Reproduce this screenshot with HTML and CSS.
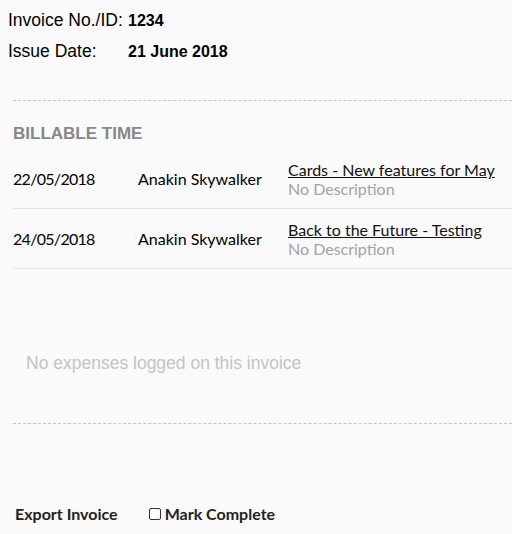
FILE: index.html
```html
<!DOCTYPE html>
<html>
<head>
<meta charset="utf-8">
<link rel="stylesheet" href="styles.css">
</head>
<body>
<div class="page">
  <table class="meta">
    <tr><td class="label">Invoice No./ID:</td><td class="value">1234</td></tr>
    <tr><td class="label">Issue Date:</td><td class="value">21 June 2018</td></tr>
  </table>
  <div class="section">
    <h2 class="title">BILLABLE TIME</h2>
    <div class="row">
      <div class="date">22/05/2018</div>
      <div class="name">Anakin Skywalker</div>
      <div class="task">
        <a class="task-link" href="#">Cards - New features for May</a>
        <div class="desc">No Description</div>
      </div>
    </div>
    <div class="row">
      <div class="date">24/05/2018</div>
      <div class="name">Anakin Skywalker</div>
      <div class="task">
        <a class="task-link" href="#">Back to the Future - Testing</a>
        <div class="desc">No Description</div>
      </div>
    </div>
    <div class="empty">No expenses logged on this invoice</div>
  </div>
  <div class="actions">
    <span class="export">Export Invoice</span>
    <label class="complete"><span class="box"></span>Mark Complete</label>
  </div>
</div>
</body>
</html>
```
FILE: styles.css
```css
html, body {
  margin: 0;
  padding: 0;
  background: #fafafa;
}
.page {
  width: 512px;
  height: 534px;
  overflow: hidden;
  font-family: "Liberation Sans", Arial, sans-serif;
  color: #000;
}
.meta {
  border-collapse: collapse;
  margin: 5px 0 0 8px;
  font-size: 16px;
}
.meta td {
  padding: 0;
  height: 31px;
  vertical-align: middle;
}
.meta .label {
  width: 120px;
  font-size: 17.5px;
}
.meta .value {
  font-weight: bold;
}
.section {
  margin: 33px 0 0 13px;
  border-top: 1px dashed #c4c4c4;
  border-bottom: 1px dashed #c4c4c4;
  height: 322px;
}
.title {
  margin: 23px 0 5px 0;
  font-family: "Liberation Sans", Arial, sans-serif;
  font-weight: bold;
  font-size: 17px;
  color: #888;
  line-height: 20px;
}
.row {
  display: grid;
  grid-template-columns: 125px 150px 1fr;
  align-items: center;
  height: 59px;
  border-bottom: 1px solid #e6e6e6;
  font-family: Lato, sans-serif;
  font-size: 16px;
}
.date {
  letter-spacing: -0.7px;
}
.task {
  display: flex;
  flex-direction: column;
  line-height: 19px;
}
.task-link {
  color: #111;
  text-decoration: underline;
}
.desc {
  color: #a3a3a3;
}
.empty {
  margin: 84px 0 0 13px;
  font-size: 17.5px;
  color: #c4c4c4;
}
.actions {
  display: flex;
  align-items: center;
  margin: 80px 0 0 15px;
  font-family: Lato, sans-serif;
  font-weight: bold;
  font-size: 16px;
  color: #222;
}
.export {
  margin-right: 31px;
}
.complete {
  display: flex;
  align-items: center;
}
.box {
  width: 10px;
  height: 10px;
  border: 1px solid #333;
  border-radius: 2px;
  margin-right: 4px;
  background: #fff;
}
```
